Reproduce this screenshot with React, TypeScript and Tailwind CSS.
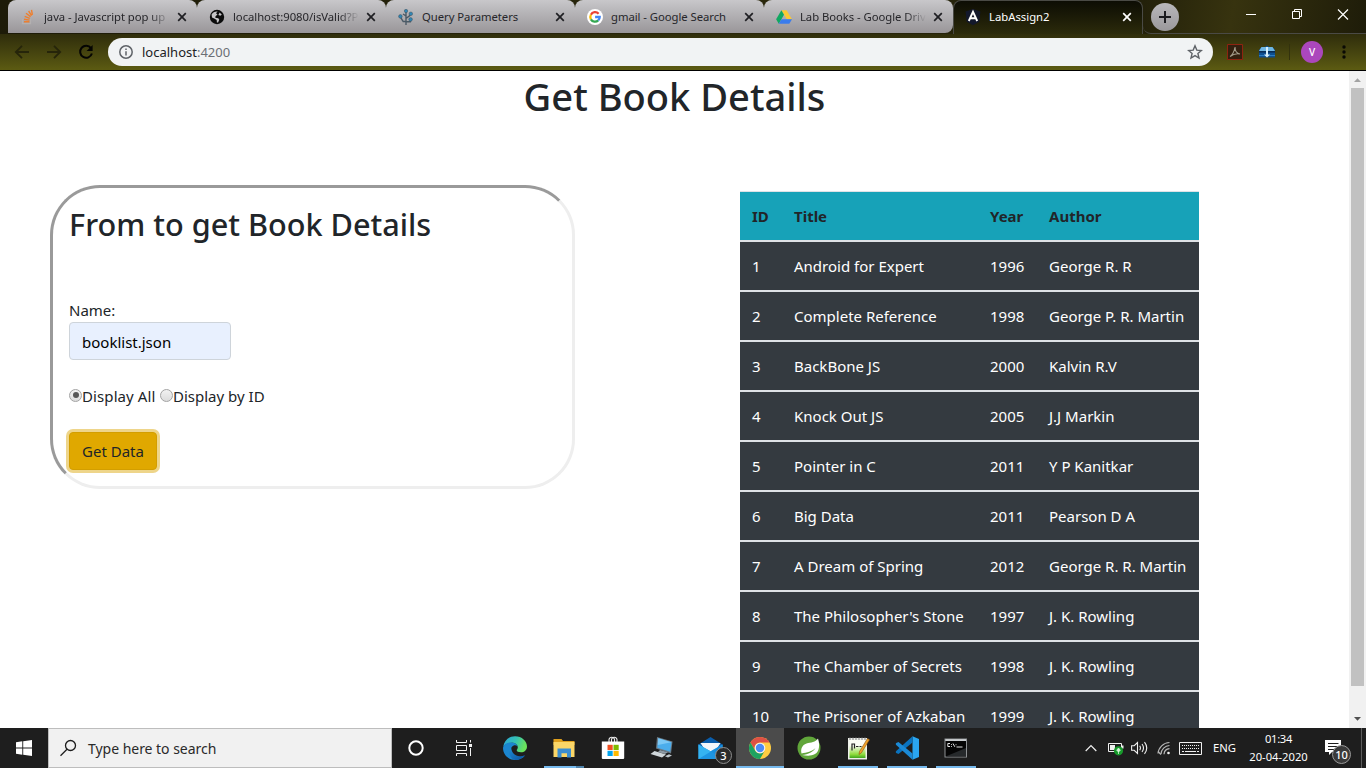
import type { ReactNode } from "react";

type Book = [string, string, string, string];

const books: Book[] = [
  ["1", "Android for Expert", "1996", "George R. R"],
  ["2", "Complete Reference", "1998", "George P. R. Martin"],
  ["3", "BackBone JS", "2000", "Kalvin R.V"],
  ["4", "Knock Out JS", "2005", "J.J Markin"],
  ["5", "Pointer in C", "2011", "Y P Kanitkar"],
  ["6", "Big Data", "2011", "Pearson D A"],
  ["7", "A Dream of Spring", "2012", "George R. R. Martin"],
  ["8", "The Philosopher's Stone", "1997", "J. K. Rowling"],
  ["9", "The Chamber of Secrets", "1998", "J. K. Rowling"],
  ["10", "The Prisoner of Azkaban", "1999", "J. K. Rowling"],
];

/* ---------- favicons ---------- */

const StackIcon = () => (
  <svg width="16" height="16" viewBox="0 0 16 16" fill="none">
    <path d="M2.500 10v4.600h8V10" stroke="#b3b0b0" strokeWidth="1.200" />
    <g stroke="#ee7f2e" strokeWidth="1.400">
      <path d="M4 12.700h5.400M4.100 10.200l5.400.9M4.700 7.300l5.100 2.100M6 4.300l4.600 3.300M8.600 2l3 4.600M11.500.8l.9 5" />
    </g>
  </svg>
);

const GlobeIcon = () => (
  <svg width="16" height="16" viewBox="0 0 16 16">
    <circle cx="8" cy="8" r="7.200" fill="#0b0b0b" />
    <path d="M2.600 5.600C3.800 3.400 6 2.300 8.600 2.500L7 4.200l1.500 1.200-2 1.800-.2 1.600 3 .4 1 1.600-1.200 2.600-1.200.1-.2-2.400-2.500-1.700L3 8.400z" fill="#c4c3c5" />
    <path d="M10.600 3.400l2.200 2.200-1.400 1.200-2-.8z" fill="#c4c3c5" />
  </svg>
);

const TreeIcon = () => (
  <svg width="16" height="16" viewBox="0 0 16 16" fill="none">
    <path d="M8 16V3M8 12.500H5.200L2.600 8.400M8 9.500l4.400-3.400M8 12.800h4.400l.6-2M8 7L5 5" stroke="#4b5a66" strokeWidth="1.400" />
    <g fill="#2f86b5" stroke="#40535f" strokeWidth=".5">
      <circle cx="8" cy="2" r="1.700" />
      <circle cx="2.400" cy="7.400" r="1.800" />
      <circle cx="12.800" cy="4.800" r="1.800" />
      <circle cx="12.600" cy="10.400" r="1.800" />
    </g>
  </svg>
);

const GoogleIcon = () => (
  <svg width="16" height="16" viewBox="0 0 16 16" fill="none">
    <circle cx="8" cy="8" r="8" fill="#fff" />
    <g strokeWidth="2.300">
      <path d="M11.600 4.700A4.700 4.700 0 0 0 3.900 5.700" stroke="#ea4335" />
      <path d="M3.900 5.700a4.700 4.700 0 0 0 0 4.700" stroke="#fbbc05" />
      <path d="M3.900 10.400a4.700 4.700 0 0 0 7.300 1" stroke="#34a853" />
      <path d="M11.200 11.400A4.700 4.700 0 0 0 12.700 8H8.100" stroke="#4285f4" />
    </g>
  </svg>
);

const DriveIcon = () => (
  <svg width="16" height="16" viewBox="0 0 16 16">
    <path d="M5.400 1.200h5.200L16 10.300h-5.200z" fill="#fbc934" />
    <path d="M5.400 1.200L8 5.800l-5.200 8.900L.1 10.200z" fill="#11a861" />
    <path d="M5.400 10.300H16l-2.700 4.500H2.800z" fill="#3a7cec" />
  </svg>
);

const AngularIcon = () => (
  <svg width="18" height="18" viewBox="0 0 18 18" fill="none">
    <path d="M9 1l7.400 2.600-1.100 10.100L9 17.200l-6.300-3.500L1.600 3.600z" fill="#13182b" />
    <path d="M4.800 13L9 3.800l4.200 9.200M6.400 10.200h5.200" stroke="#fff" strokeWidth="1.900" />
  </svg>
);

const CloseX = ({ color }: { color: string }) => (
  <svg width="10" height="10" viewBox="0 0 10 10">
    <path d="M1.200 1.200l7.600 7.600M8.800 1.200L1.200 8.800" stroke={color} strokeWidth="1.700" />
  </svg>
);

/* ---------- browser chrome ---------- */

const tabs: { title: string; icon: ReactNode; fade: boolean }[] = [
  { title: "java - Javascript pop up", icon: <StackIcon />, fade: true },
  { title: "localhost:9080/isValid?P", icon: <GlobeIcon />, fade: true },
  { title: "Query Parameters", icon: <TreeIcon />, fade: false },
  { title: "gmail - Google Search", icon: <GoogleIcon />, fade: false },
  { title: "Lab Books - Google Driv", icon: <DriveIcon />, fade: true },
];

function TabStrip() {
  return (
    <div className="flex h-[34px] shrink-0 bg-[linear-gradient(100deg,#1d1b08_0%,#2b280c_60%,#1f1d09_82%,#37330f_90%,#1e1c09_100%)] pl-2">
      {tabs.map((t, i) => (
        <div
          key={t.title}
          className={
            "flex h-[33px] w-[189px] items-center rounded-t-lg bg-linear-to-b from-[#c8c7ca] to-[#999699] " +
            (i === 4 ? "rounded-br-lg" : "")
          }
        >
          <div className="ml-3 flex w-4 shrink-0">{t.icon}</div>
          <div
            className={
              "ml-2 w-[126px] shrink-0 whitespace-nowrap text-[11.300px] leading-5 tracking-[-0.050px] text-[#26262a] " +
              (t.fade ? "[mask-image:linear-gradient(to_right,#000_84%,transparent)]" : "")
            }
          >
            {t.title}
          </div>
          <div className="ml-[7px] flex w-[10px] shrink-0">
            <CloseX color="#1f1f23" />
          </div>
          {i < 4 && <div className="ml-auto -mr-px h-5 w-px bg-[#6c6a6c]" />}
        </div>
      ))}
      <div className="flex h-[34px] w-[190px] items-center rounded-t-lg border-x border-t border-[#4a4a45] bg-linear-to-b from-[#0d0d04] to-[#2c2b0b] pb-px">
        <div className="ml-2.5 flex w-[18px] shrink-0">
          <AngularIcon />
        </div>
        <div className="ml-[7px] -mt-px w-[126px] shrink-0 text-[11.300px] leading-5 text-white">LabAssign2</div>
        <div className="ml-[7px] flex w-[10px] shrink-0">
          <CloseX color="#fff" />
        </div>
      </div>
      <div className="flex h-[34px] flex-1 items-center rounded-bl-lg border-b border-[#4a4a45] pl-2">
        <div className="flex size-7 items-center justify-center rounded-full bg-linear-to-b from-[#b9b8bb] to-[#9a989b]">
          <svg width="14" height="14" viewBox="0 0 14 14">
            <path d="M7 1v12M1 7h12" stroke="#1b1b1f" strokeWidth="2" />
          </svg>
        </div>
        <svg className="ml-auto mr-3 mb-1.5" width="110" height="14" viewBox="0 0 110 14" fill="none" stroke="#fff">
          <path d="M2 7.500h10" />
          <path d="M48.500 4.500h7v7h-7zM50.500 4.500v-2h7v7h-2" />
          <path d="M94 2.500l10 10M104 2.500l-10 10" strokeWidth="1.200" />
        </svg>
      </div>
    </div>
  );
}

function Toolbar() {
  return (
    <div className="flex h-[37px] shrink-0 items-center border-b border-black bg-linear-to-b from-[#2f2d0b] to-[#5c5b12]">
      <svg width="108" height="36" viewBox="0 0 108 36" fill="none">
        <path d="M29 18H16M22 11.800L15.800 18l6.200 6.200" stroke="#26250a" strokeWidth="1.800" />
        <path d="M47 18h13M54 11.800l6.200 6.200-6.200 6.200" stroke="#26250a" strokeWidth="1.800" />
        <path d="M91 14.200a6 6 0 1 0 .9 5.300" stroke="#050503" strokeWidth="2" />
        <path d="M92.600 11v6h-6z" fill="#050503" />
      </svg>
      <div className="flex h-7 w-[1105px] items-center rounded-full bg-[#f1f3f4] pl-[11px] pr-2.5">
        <svg width="14" height="14" viewBox="0 0 14 14" fill="none" stroke="#5f6368" strokeWidth="1.500">
          <circle cx="7" cy="7" r="6.200" />
          <path d="M7 6.200v4.300M7 3.400V5" />
        </svg>
        <div className="ml-[9px] text-[13px] leading-5 text-[#202124]">
          localhost<span className="text-[#6b6f74]">:4200</span>
        </div>
        <svg className="ml-auto" width="16" height="16" viewBox="0 0 16 16" fill="none">
          <path d="M8 1.800l1.800 4.300 4.600.4-3.500 3 1.100 4.500L8 11.600 4 14l1.100-4.500-3.500-3 4.600-.4z" stroke="#5f6368" strokeWidth="1.400" />
        </svg>
      </div>
      <svg className="ml-[14px]" width="16" height="16" viewBox="0 0 16 16" fill="none">
        <path d="M.5.500h15v15H.500z" fill="#33200f" stroke="#8e2410" />
        <path d="M3 12.500c2-1 4.500-5 5-9.500 0 4 2 6.500 5 7-3-.6-6.500-.2-10 2.500z" stroke="#a39c8a" strokeWidth="1.100" />
      </svg>
      <svg className="ml-4" width="16" height="16" viewBox="0 0 16 16">
        <path d="M0 6l2.500-3H6l2-1.500L10 3h3.500L16 6v7.500H0z" fill="#0d4f92" />
        <path d="M2.500 3h11L16 7H0z" fill="#6fb6e2" />
        <path d="M0 7.800h16" stroke="#072c57" strokeWidth="1.600" />
        <path d="M0 11.500h16" stroke="#2a7cc0" strokeWidth="1" />
        <path d="M7 3h2v7.500h2L8 13.500l-3-3h2z" fill="#d6effb" />
      </svg>
      <div className="ml-[14px] h-4 w-px bg-[#33320d]" />
      <div className="ml-[11px] flex size-[22px] items-center justify-center rounded-full bg-[#ab47bc] text-[10px] font-medium text-white">V</div>
      <svg className="ml-[19px]" width="4" height="16" viewBox="0 0 4 16" fill="#0a0a04">
        <circle cx="2" cy="3" r="1.700" />
        <circle cx="2" cy="8" r="1.700" />
        <circle cx="2" cy="13" r="1.700" />
      </svg>
    </div>
  );
}

/* ---------- page ---------- */

const Radio = ({ checked }: { checked: boolean }) => (
  <span className="mb-0.5 flex size-[13px] items-center justify-center rounded-full border border-[#a3a3a3] bg-linear-to-b from-[#f2f2f2] to-[#dcdcdc]">
    {checked && <span className="size-[6px] rounded-full bg-[#565656]" />}
  </span>
);

function BookForm() {
  return (
    <div className="ml-[50px] mt-[66px] h-[304px] w-[525px] rounded-[50px] border-[3px] border-t-[#9a9a9a] border-r-[#eeeeee] border-b-[#eeeeee] border-l-[#9a9a9a] p-4 text-[15px] leading-6">
      <h2 className="h-[38px] whitespace-nowrap text-[30.650px] font-medium leading-[41px]">From to get Book Details</h2>
      <div className="mt-14">Name:</div>
      <div className="flex h-[38px] w-[162px] items-center rounded border border-[#ced4da] bg-[#e8f0fe] pl-3 pt-0.5 text-black">
        booklist.json
      </div>
      <div className="mt-6 flex h-6 items-center">
        <Radio checked />
        <span className="w-[78px] tracking-[0.100px]">Display All</span>
        <Radio checked={false} />
        <span>Display by ID</span>
      </div>
      <div className="mt-6 flex h-[38px] w-[88px] items-center justify-center rounded border border-[#d39e00] bg-[#e0a800] ring-[3px] ring-[#eed58a]">
        Get Data
      </div>
    </div>
  );
}

function BookTable() {
  return (
    <div className="mt-[72px] ml-[165px] w-[459px] text-[15px] leading-6">
      <div className="grid h-[49px] grid-cols-[42px_196px_59px_162px] items-center border-t border-[#dee2e6] bg-[#17a2b8] font-bold">
        {["ID", "Title", "Year", "Author"].map((h) => (
          <div key={h} className="pl-3">
            {h}
          </div>
        ))}
      </div>
      {books.map((b) => (
        <div
          key={b[0]}
          className="grid h-[50px] grid-cols-[42px_196px_59px_162px] items-center whitespace-nowrap border-t-2 border-[#dee2e6] bg-[#343a40] text-white"
        >
          {b.map((c, i) => (
            <div key={i} className="pl-3">
              {c}
            </div>
          ))}
        </div>
      ))}
    </div>
  );
}

function Page() {
  return (
    <div className="flex min-h-0 flex-1 bg-white">
      <div className="h-full w-[1349px] overflow-hidden text-[#212529]">
        <h1 className="h-12 text-center text-[38.100px] font-medium leading-[51px]">Get Book Details</h1>
        <div className="flex items-start">
          <BookForm />
          <BookTable />
        </div>
      </div>
      <div className="flex w-[17px] flex-col items-center bg-[#f1f1f1]">
        <svg width="17" height="17" viewBox="0 0 17 17">
          <path d="M5 11h7L8.500 7.200z" fill="#a3a3a3" />
        </svg>
        <div className="h-[598px] w-[13px] bg-[#c1c1c1]" />
        <svg className="mt-auto" width="17" height="17" viewBox="0 0 17 17">
          <path d="M5 6h7L8.500 9.800z" fill="#505050" />
        </svg>
      </div>
    </div>
  );
}

/* ---------- taskbar ---------- */

const EdgeIcon = () => (
  <svg width="24" height="24" viewBox="0 0 24 24">
    <defs>
      <linearGradient id="edgeTop" x1="0" y1="0" x2="1" y2=".3">
        <stop offset="0" stopColor="#2aa5dc" />
        <stop offset=".55" stopColor="#35c1b4" />
        <stop offset="1" stopColor="#6ae35c" />
      </linearGradient>
      <linearGradient id="edgeLow" x1="0" y1="0" x2="1" y2="1">
        <stop offset="0" stopColor="#1e8fd6" />
        <stop offset="1" stopColor="#0c4f9e" />
      </linearGradient>
    </defs>
    <path d="M.3 10.500C1.200 4.500 6 .2 12 .2c7 0 12 5 12 10.300 0 3.500-2.700 5.800-6 5.800-2.800 0-4.300-1-4.300-2 0-.8 1.100-1.200 1.100-3 0-2.300-2.400-4.500-6-4.500-3.600 0-6.800 1.600-8.500 3.700z" fill="url(#edgeTop)" />
    <path d="M0 12C.3 8.700 3.800 6.400 8 6.400c3.500 0 6 1.600 6.700 4-1-1-2.600-1.400-4-.9-2 .8-3.100 2.900-2.800 5.300.5 4 4.200 6.600 8.300 6.600 2 0 4-.6 5.800-1.800C19.700 22.600 16 24 12 24 5.400 24 0 18.700 0 12z" fill="#1b86d0" />
    <path d="M8.200 11.500c-1.700 1.800-2.500 4.500-1.600 7.200 1 3 3.500 5 5.900 5.300 3.800-.1 7.300-1.700 9.500-5-1.500.9-3.300 1.300-5.200 1.200-4.800-.3-8.400-3.600-8.600-8.700z" fill="url(#edgeLow)" />
  </svg>
);

const FolderIcon = () => (
  <svg width="24" height="24" viewBox="0 0 24 24">
    <path d="M1.500 3h8l1.500 2h11.500v4H1.500z" fill="#e0a01d" />
    <path d="M1.500 6h21v15h-21z" fill="#fbd667" />
    <path d="M5.500 12.500h13.500v9h-4v-4.300H9.500v4.300h-4z" fill="#3c8ed0" />
  </svg>
);

const StoreIcon = () => (
  <svg width="24" height="24" viewBox="0 0 24 24">
    <path d="M8 6V3.500a2.800 2.800 0 0 1 5.500 0V6M10.500 6V3.500a2.800 2.800 0 0 1 5.500 0V6" fill="none" stroke="#ececec" strokeWidth="1.100" />
    <path d="M.8 5.500h22.400V22q0 1-1 1H1.800q-1 0-1-1z" fill="#fff" />
    <path d="M6.500 8.800h5.200V14H6.500z" fill="#f25022" />
    <path d="M12.500 8.800h5.200V14h-5.200z" fill="#7fba00" />
    <path d="M6.500 14.800h5.200V20H6.500z" fill="#00a4ef" />
    <path d="M12.500 14.800h5.200V20h-5.200z" fill="#ffb900" />
  </svg>
);

const PcIcon = () => (
  <svg width="24" height="24" viewBox="0 0 24 24">
    <path d="M7 1l15.500 4.500-1.500 12L6 12.500z" fill="#6b7984" />
    <path d="M8.200 2.300L21.500 6.200l-1.300 9.600L7.300 11.800z" fill="#4badec" />
    <path d="M8.200 2.300L21.500 6.200 7.800 9z" fill="#7bc8f6" />
    <path d="M10 14l8 2.300-3 1.700-7-2z" fill="#8d9aa4" />
    <path d="M4.500 15L16 18.500 12 21.500.5 18z" fill="#cfd6da" />
    <path d="M15 20.200l4-2 3 1.200-4 2z" fill="#bfc8cd" />
  </svg>
);

const MailIcon = () => (
  <svg width="26" height="24" viewBox="0 0 26 24">
    <path d="M.5 8.500L12.500 1l12 7.500v4H.500z" fill="#0a5dab" />
    <path d="M2.500 7h20l-5 8h-10z" fill="#f4f7fa" />
    <path d="M.5 8.500l12 6.800 12-6.800V23H.500z" fill="#1e9be6" />
    <path d="M.5 8.500L13 15.500 24.500 23H.500z" fill="#35b3f1" />
    <path d="M24.500 8.500L.500 23h24z" fill="#1589dc" opacity=".7" />
  </svg>
);

const ChromeIcon = () => (
  <svg width="24" height="24" viewBox="0 0 24 24">
    <circle cx="12" cy="12" r="11" fill="#ffcd41" />
    <path d="M2.470 6.500a11 11 0 0 1 19.060 0H12a5.500 5.500 0 0 0-4.760 8.250z" fill="#de5145" />
    <path d="M2.470 6.500a11 11 0 0 0 9.530 16.500l4.760-8.250a5.500 5.500 0 0 1-9.520 0z" fill="#1da261" />
    <circle cx="12" cy="12" r="5.300" fill="#f4f4f4" />
    <circle cx="12" cy="12" r="4.200" fill="#4c8bf5" />
  </svg>
);

const SpringIcon = () => (
  <svg width="24" height="24" viewBox="0 0 24 24">
    <circle cx="12" cy="12" r="11.500" fill="#61a63a" />
    <path d="M21 2.500c2 6.500 1.500 13-3 15.500-4 2.200-8 1.800-13 1 6.500-.8 11-3 13.500-7-3.500 3.500-8.500 4.500-14 5.500-1-4.500.5-8.500 5-10 4.500-1.300 9-1 11.500-5z" fill="#fff" />
  </svg>
);

const NotepadIcon = () => (
  <svg width="24" height="24" viewBox="0 0 24 24">
    <defs>
      <linearGradient id="note" x1="0" y1="0" x2="0" y2="1">
        <stop offset=".3" stopColor="#fafcf5" />
        <stop offset=".8" stopColor="#8edb3c" />
        <stop offset="1" stopColor="#3fa51e" />
      </linearGradient>
    </defs>
    <path d="M2 2h19v21.500H2z" fill="#eef0ea" />
    <path d="M3.500 4h16v18h-16z" fill="url(#note)" />
    <path d="M4 1.500v2.500M7 1.500v2.500M10 1.500v2.500M13 1.500v2.500M16 1.500v2.500M19 1.500v2.500" stroke="#8c8c8c" strokeWidth="1.100" />
    <path d="M6 8h2M6 7.500v7M8.500 7.500v5M10 10.500h2.500M13.500 10.500h2" stroke="#222" strokeWidth="1.200" />
    <path d="M21.500 2.500l2 1.200-8 13-2.500 1.800.5-3z" fill="#f0a22a" stroke="#8a5413" strokeWidth=".6" />
  </svg>
);

const CodeIcon = () => (
  <svg width="24" height="24" viewBox="0 0 24 24">
    <path d="M17.500.3L24 3v18l-6.500 2.700z" fill="#2aa6f1" />
    <path d="M17.500.3v6.200L3.500 18 1.200 17q-1-1 0-2z" fill="#0a73bf" />
    <path d="M17.500 23.700v-6.200L3.500 6 1.200 7q-1 1 0 2z" fill="#1b8ad6" />
  </svg>
);

const CmdIcon = () => (
  <svg width="24" height="24" viewBox="0 0 24 24">
    <path d="M.5 2.500h22.500v19H.500z" fill="#8f9294" />
    <path d="M1.500 5h20.500v15.500H1.500z" fill="#050505" />
    <path d="M1.500 3.300h20.500v1.500H1.500z" fill="#d9dcde" />
    <path d="M6 7.500H3.800v3H6M7.500 8v.8M7.500 10v.8M9 7.500l1.800 3.300M12 8.300v.9M12.500 11h6" fill="none" stroke="#e5e5e5" strokeWidth="1" />
    <path d="M1.500 20.500L22 12v8.500z" fill="#26292b" />
  </svg>
);

const apps: { name: string; icon: ReactNode; open: boolean }[] = [
  { name: "edge", icon: <EdgeIcon />, open: false },
  { name: "files", icon: <FolderIcon />, open: true },
  { name: "store", icon: <StoreIcon />, open: false },
  { name: "pc", icon: <PcIcon />, open: false },
  { name: "mail", icon: <MailIcon />, open: false },
  { name: "chrome", icon: <ChromeIcon />, open: true },
  { name: "spring", icon: <SpringIcon />, open: false },
  { name: "notepad", icon: <NotepadIcon />, open: true },
  { name: "code", icon: <CodeIcon />, open: true },
  { name: "cmd", icon: <CmdIcon />, open: true },
];

function Taskbar() {
  return (
    <div className="flex h-10 shrink-0 bg-[#1e1e1e] text-white">
      <div className="flex w-12 items-center justify-center">
        <svg width="16" height="16" viewBox="0 0 16 16" fill="#fff">
          <path d="M0 2.200L6.300 1.300v6.200H0zM7.200 1.200L16 0v7.500H7.200zM0 8.400h6.300v6.300L0 13.800zM7.200 8.400H16V16l-8.800-1.200z" />
        </svg>
      </div>
      <div className="flex w-[344px] items-center border border-[#bdbdbd] bg-[#f1f1f1]">
        <svg className="ml-2.5" width="18" height="18" viewBox="0 0 18 18" fill="none" stroke="#1c1c1c" strokeWidth="1.300">
          <circle cx="11.500" cy="6.500" r="5" />
          <path d="M8 10.200L1.500 16.800" />
        </svg>
        <div className="ml-[11px] pt-px text-[14px] leading-5 tracking-[-0.030px] text-[#2a2a2a]">Type here to search</div>
      </div>
      <div className="flex w-12 items-center justify-center">
        <svg width="16" height="16" viewBox="0 0 16 16">
          <circle cx="8" cy="8" r="6.700" fill="none" stroke="#fff" strokeWidth="2" />
        </svg>
      </div>
      <div className="mr-[3px] flex w-12 items-center justify-center">
        <svg width="16" height="16" viewBox="0 0 16 16" fill="none" stroke="#f2f2f2">
          <path d="M.5 0v2.500h10V0M.5 5.500h10v5H.5zM.5 16v-2.500h10V16M14.500 0v2.500M14.500 8v8" />
          <path d="M13 4h3v3h-3z" fill="#f2f2f2" stroke="none" />
        </svg>
      </div>
      <div className="flex gap-px">
        {apps.map((a) => (
          <div
            key={a.name}
            className={"relative flex w-12 items-center justify-center " + (a.name === "chrome" ? "bg-[#4b4b4b]" : "")}
          >
            {a.icon}
            {a.open && (
              <div
                className={
                  "absolute bottom-0 h-0.5 bg-[#76b9ed] " +
                  (a.name === "chrome" ? "inset-x-0" : "inset-x-1 ") +
                  (a.name === "files" ? " border-r-8 border-[#4f83ab]" : "")
                }
              />
            )}
            {a.name === "mail" && (
              <div className="absolute bottom-1 right-[3px] flex size-[17px] items-center justify-center rounded-full border border-[#8d8d8d] bg-[#2b2b2b] text-[11px] font-medium leading-none">
                3
              </div>
            )}
          </div>
        ))}
      </div>
      <div className="ml-auto flex items-center">
        <svg width="12" height="8" viewBox="0 0 12 8" fill="none" stroke="#f0f0f0" strokeWidth="1.200">
          <path d="M.7 7L6 1.700 11.300 7" />
        </svg>
        <svg className="ml-[11px]" width="16" height="16" viewBox="0 0 16 16">
          <path d="M.5 3.500h13v8H.5z" fill="none" stroke="#f0f0f0" />
          <path d="M2 5h5v5H2zM14 5.500h1.500v3H14z" fill="#f0f0f0" />
          <circle cx="10.500" cy="10.800" r="4.600" fill="#179a2b" />
          <path d="M10.500 8l1.800 2.200-1.800 1.800-1.800-1.800zM10.500 11v3" fill="#d7f5d9" stroke="#d7f5d9" strokeWidth=".8" />
        </svg>
        <svg className="ml-[7px]" width="17" height="14" viewBox="0 0 17 14" fill="none" stroke="#f0f0f0" strokeWidth="1.100">
          <path d="M.6 4.700h2.600L6.500 1.500v11L3.200 9.300H.6zM8.700 4.800q1.500 2.200 0 4.400M11 3q3 4 0 8M13.500 1.200q4.500 5.800 0 11.600" />
        </svg>
        <svg className="ml-[9px]" width="14" height="14" viewBox="0 0 14 14" fill="none" stroke="#b8b8b8" strokeWidth="1.200">
          <path d="M1 12.500A12 12 0 0 1 12.500 1.500M4 13A9 9 0 0 1 12.500 4.500M7 13.200A6 6 0 0 1 12.500 7.700" />
          <path d="M1 10.500L4 13.500" />
          <circle cx="11.500" cy="12" r="1.300" fill="#f0f0f0" stroke="none" />
        </svg>
        <svg className="ml-2" width="23" height="13" viewBox="0 0 23 13" fill="none" stroke="#f0f0f0">
          <path d="M.5.500h22v12H.500z" />
          <path d="M3 3.500h17M3 6.500h17" strokeDasharray="1 1" />
          <path d="M3 9.500h2M6 9.500h11M18 9.500h2" />
        </svg>
        <div className="ml-[11px] text-[11.300px]">ENG</div>
        <div className="ml-[13px] flex w-[59px] flex-col items-center text-[11.200px] leading-[18px]">
          <div className="tracking-[-0.300px]">01:34</div>
          <div>20-04-2020</div>
        </div>
        <div className="relative ml-[17px] mr-[10px] flex size-[26px]">
          <svg width="17" height="17" viewBox="0 0 17 17" className="mt-[4px]">
            <path d="M0 1h16v12H7l-3 3v-3H0z" fill="#fff" />
            <path d="M3 4.500h10.500M3 7.500h10.500M3 10.500h6" stroke="#1e1e1e" strokeWidth="1" />
          </svg>
          <div className="absolute bottom-[-3px] right-0 flex size-[19px] items-center justify-center rounded-full border border-[#9a9a9a] bg-[#3a3a3a] text-[11px] font-medium leading-none">
            10
          </div>
        </div>
        <div className="mr-1 h-10 w-px bg-[#5c5c5c]" />
      </div>
    </div>
  );
}

export default function App() {
  return (
    <div className="flex h-screen w-full flex-col overflow-hidden font-['Noto_Sans','Open_Sans',sans-serif]">
      <TabStrip />
      <Toolbar />
      <Page />
      <Taskbar />
    </div>
  );
}
